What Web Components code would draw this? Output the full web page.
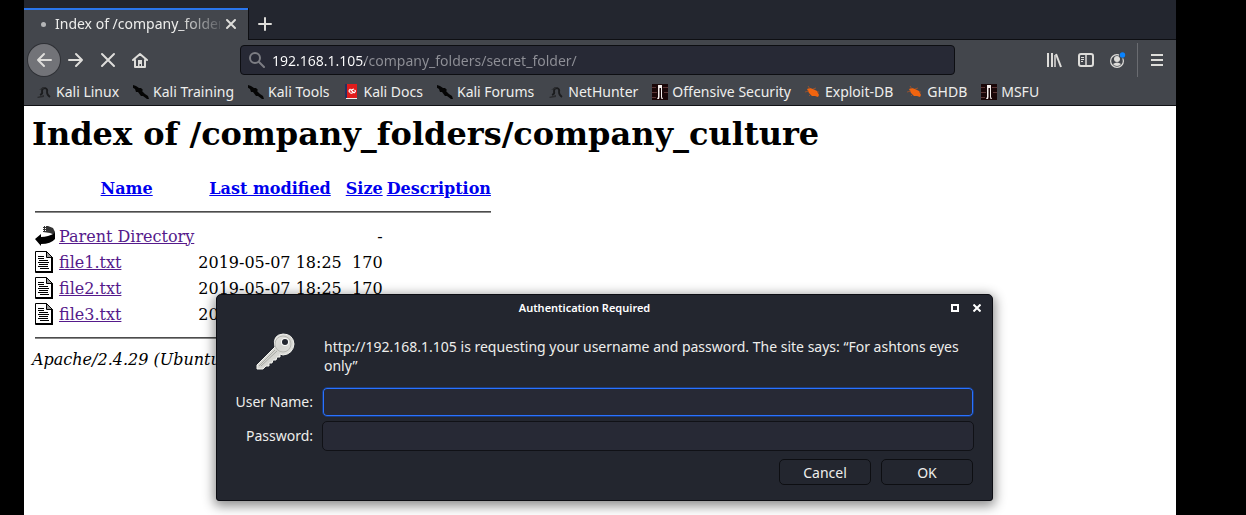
<!DOCTYPE html>
<html lang="en">
<head>
<meta charset="utf-8">
<title>Index of /company_folders/company_culture</title>
<style>
  html { background: #000; }
  body { margin: 0; font-family: "Noto Sans", sans-serif; font-size: 14px; color: #eeeeec; }
</style>
</head>
<body>
<browser-window></browser-window>

<script>
const define = (name, html, setup) => {
  const template = document.createElement('template');
  template.innerHTML = html;
  customElements.define(name, class extends HTMLElement {
    connectedCallback() {
      if (this.shadowRoot) return;
      const root = this.attachShadow({ mode: 'open' });
      root.append(template.content.cloneNode(true));
      if (setup) setup.call(this, root);
    }
  });
};

const line = (w, body) => `<g fill="none" stroke="#deddda" stroke-width="${w}" stroke-linecap="round" stroke-linejoin="round">${body}</g>`;
const blade = `<path fill="#050505" d="M0 1l3 1 3 2 2 0 2 2-1 1 3 3 3 2 1 3-2 0-4-3-2 0-3-4-2 0-1-3-3-2z"/>`;
const dragon = `<path fill="none" stroke="#1b1c1e" stroke-width="1.800" d="M4 11q3-1 2-4-0-3 3-3 3 1 2 4 0 3 3 5"/><path fill="#2a2b2e" d="M1 13l7-2 0 2-6 1zM3 6l4-3 3 0-3 2z"/>`;
const offsec = `<path fill="#1a0708" d="M0 0h16v16H0z"/><path stroke="#5d3636" d="M0 3.500h4M11 3.500h5M0 8.500h5M12 8.500h4M0 13.500h4"/><path fill="#f6f0ee" d="M6 1h4v12l1 2H9.500L9 13V4H7.500v9L7 15H5l1-2z"/>`;
const bug = `<path fill="#f0640f" d="M2 5l3-1 3 1 4 2 2 4-1 2-3-1-3 0-3-3z"/><path stroke="#a95427" stroke-width=".8" fill="none" d="M3 2l2 3M8 5l3-1M0 8l4-1M4 12l2-2M12 8l2 0"/>`;
const icons = {
  back: [16, line(2, '<path d="M15 8H2M8 2L2 8l6 6"/>')],
  forward: [16, line(2, '<path d="M1 8h13M8 2l6 6-6 6"/>')],
  stop: [16, line(2, '<path d="M2 2l12 12M14 2L2 14"/>')],
  home: [16, line(2, '<path d="M1 8l7-6 7 6M3 8v7h10V8"/>') + '<path fill="#deddda" d="M6 8h4v6H9v-2H7.500v2H6z"/>'],
  plus: [14, line(2, '<path d="M7 1v12M1 7h12"/>')],
  close: [12, line(2, '<path d="M2 2l8 8M10 2l-8 8"/>')],
  search: [16, '<g fill="none" stroke="#7c7d83" stroke-width="2" stroke-linecap="round"><circle cx="6" cy="6" r="5"/><path d="M10 10l5 5"/></g>'],
  library: [16, '<path stroke="#deddda" stroke-width="2" fill="none" d="M2 1v14M6 1v14"/><path stroke="#deddda" stroke-width="1.500" d="M9 3v12"/><path stroke="#deddda" stroke-width="2" d="M10 2l5 13"/>'],
  sidebar: [16, line(2, '<rect x="1" y="2" width="14" height="12" rx="2"/>') + '<path stroke="#deddda" d="M8 2v12" stroke-width="1.500"/><path stroke="#deddda" d="M3 5.500h3M3 7.500h3M3 9.500h2"/>'],
  account: [16, '<circle cx="7" cy="9" r="6.400" fill="none" stroke="#deddda" stroke-width="1.200"/><circle cx="7" cy="7" r="3" fill="#deddda"/><path fill="#deddda" d="M3 12q4-3 8 0-1 2-4 2t-4-2z"/><circle cx="12.500" cy="3" r="3.500" fill="#43464c"/><circle cx="12.500" cy="3" r="2.700" fill="#0a84ff"/>'],
  menu: [16, '<path stroke="#deddda" stroke-width="2" d="M2 3h12M2 8h12M2 13h12"/>'],
  linux: [16, dragon],
  blade: [16, blade],
  docs: [16, '<path fill="#27305f" d="M2 0h2v14H2z"/><path fill="#e01b1b" d="M4 0h10v14H4z"/><path fill="#f1eeee" d="M3 14h11v1H3z"/><path fill="none" stroke="#fff" stroke-width="1.200" d="M7.500 5q-3 2 0 3.500M11 5L8 6l2.500 2.500-3 1M11.500 6q2 1-.5 3"/>'],
  offsec: [16, offsec],
  bug: [16, bug],
  maximize: [8, '<path fill="none" stroke="#fff" stroke-width="2" d="M1 1h6v6H1z"/>'],
  cross: [8, '<path stroke="#fff" stroke-width="2" d="M.5.5l7 7M7.500.5l-7 7"/>'],
  key: [40, `<defs><linearGradient id="m" x1="0" y1="0" x2="1" y2="1"><stop offset="0" stop-color="#f4f4f2"/><stop offset=".5" stop-color="#d3d3cf"/><stop offset="1" stop-color="#eeeeec"/></linearGradient></defs>
    <path fill="url(#m)" stroke="#f4f4f0" d="M20 15Q17 3 28 2q10 0 11 10-1 10-11 11l-3-1 0 3-3 0-1 3-3 0-1 3-3 0 0 3-3 0-3 3H2v-4z"/>
    <path stroke="#a9aaa5" stroke-width="1" fill="none" d="M20 18L4 34M22 19L6 34"/><circle cx="28" cy="12" r="8" fill="none" stroke="#b7b8b3"/>
    <circle cx="30" cy="10" r="4" fill="#fafaf8"/><circle cx="30" cy="10" r="3" fill="#23262f"/>`]
};

define('ui-icon', `<style>:host{display:block;flex:none} svg{display:block}</style><svg aria-hidden="true"></svg>`, function (root) {
  const [size, body] = icons[this.getAttribute('name')];
  const svg = root.querySelector('svg');
  svg.setAttribute('viewBox', `0 0 ${size} ${size}`);
  svg.setAttribute('width', size);
  svg.setAttribute('height', size);
  svg.innerHTML = body;
});

define('icon-button', `<style>
  :host{display:block;flex:none}
  button{display:grid;place-items:center;width:32px;height:32px;padding:0;border:0;border-radius:50%;background:none}
  :host([round]) button{background:#727378;box-shadow:0 0 0 1px #2f3136}
  :host([small]) button{width:22px;height:22px}
</style><button type="button"><slot></slot></button>`, function (root) {
  root.querySelector('button').setAttribute('aria-label', this.getAttribute('label'));
});

define('tab-strip', `<style>
  :host{display:flex;height:40px;background:#23262f;box-sizing:border-box;padding-top:8px}
  .tab{display:flex;align-items:center;box-sizing:border-box;width:224px;padding:0 6px 2px 17px;background:#43464c;border-top:2px solid #2a76ee}
  .dot{width:5px;height:5px;border-radius:50%;background:#b4b5b7;margin-right:9px;flex:none}
  .title{flex:1;min-width:0;white-space:nowrap;line-height:20px;-webkit-mask-image:linear-gradient(90deg,#000 75%,rgba(0,0,0,.15));mask-image:linear-gradient(90deg,#000 75%,rgba(0,0,0,.15))}
  .rest{flex:1;display:flex;align-items:center;border-left:1px solid #0e0f13;border-bottom:1px solid #0e0f13}
</style>
<div class="tab"><span class="dot"></span><span class="title">Index of /company_folder</span><icon-button small label="Close tab"><ui-icon name="close"></ui-icon></icon-button></div>
<div class="rest"><icon-button label="New tab"><ui-icon name="plus"></ui-icon></icon-button></div>`);

define('url-bar', `<style>
  :host{display:flex;align-items:center;gap:7px;box-sizing:border-box;height:30px;padding:0 8px;border:1px solid #0d0e12;border-radius:4px;background:#272935}
  input{flex:1;min-width:0;height:28px;padding:0;border:0;outline:0;font:inherit;
    background:linear-gradient(90deg,#fff 93px,#8f9097 93px);-webkit-background-clip:text;background-clip:text;color:transparent}
</style>
<ui-icon name="search"></ui-icon><input type="text" aria-label="Address" value="192.168.1.105/company_folders/secret_folder/">`);

define('nav-bar', `<style>
  :host{display:flex;align-items:center;box-sizing:border-box;height:40px;padding:0 3px 0 4px;background:#43464c}
  url-bar{flex:1;margin:0 83px 0 84px}
  .sep{width:1px;height:34px;background:#6a6c71;margin:0 3px}
</style>
<icon-button round label="Back"><ui-icon name="back"></ui-icon></icon-button>
<icon-button label="Forward"><ui-icon name="forward"></ui-icon></icon-button>
<icon-button label="Stop"><ui-icon name="stop"></ui-icon></icon-button>
<icon-button label="Home"><ui-icon name="home"></ui-icon></icon-button>
<url-bar></url-bar>
<icon-button label="Library"><ui-icon name="library"></ui-icon></icon-button>
<icon-button label="Sidebars"><ui-icon name="sidebar"></ui-icon></icon-button>
<icon-button label="Account"><ui-icon name="account"></ui-icon></icon-button>
<span class="sep"></span>
<icon-button label="Menu"><ui-icon name="menu"></ui-icon></icon-button>`);

define('book-mark', `<style>
  :host{display:block;flex:none}
  a{display:flex;align-items:center;gap:4px;line-height:20px;color:inherit;text-decoration:none;white-space:nowrap}
</style><a href="#"><slot></slot></a>`, function (root) {
  const icon = document.createElement('ui-icon');
  icon.setAttribute('name', this.getAttribute('icon'));
  root.querySelector('a').prepend(icon);
});

define('bookmarks-bar', `<style>
  :host{display:flex;gap:14px;box-sizing:border-box;height:26px;padding:2px 12px;overflow:hidden;background:#43464c;border-bottom:1px solid #101115}
</style>
<book-mark icon="linux">Kali Linux</book-mark>
<book-mark icon="blade">Kali Training</book-mark>
<book-mark icon="blade">Kali Tools</book-mark>
<book-mark icon="docs">Kali Docs</book-mark>
<book-mark icon="blade">Kali Forums</book-mark>
<book-mark icon="linux">NetHunter</book-mark>
<book-mark icon="offsec">Offensive Security</book-mark>
<book-mark icon="bug">Exploit-DB</book-mark>
<book-mark icon="bug">GHDB</book-mark>
<book-mark icon="offsec">MSFU</book-mark>`);

const page = `<svg class="i" width="20" height="22" viewBox="0 0 20 22" aria-hidden="true"><path fill="#fff" stroke="#000" d="M.5.500h11l6 6v15H.5z"/><path fill="#999" stroke="#000" d="M11.500.500v6h6z"/><path stroke="#000" d="M17 7v15M1 21h17" stroke-width="2"/><path stroke="#000" d="M3 5.500h6M3 7.500h6M4 9.500h9M3 11.500h11M4 13.500h9M3 15.500h10M5 17.500h9"/></svg>`;
const back = `<svg class="i" width="20" height="22" viewBox="0 0 20 22" aria-hidden="true"><path fill="#333" d="M8 1h5l5 2 2 4v3l-5-2-7-1z"/><path fill="#000" d="M0 14l6-5v3q7 0 14-4v6q-4 5-14 5v2z"/><path stroke="#fff" stroke-width="1" stroke-dasharray="1 1" d="M8.500 1v6M10.500 1v5"/></svg>`;
const row = (icon, name, date, size) => `<tr><td>${icon}</td><td><a class="v" href="#">${name}</a></td><td class="r">${date}</td><td class="r">${size}</td><td></td></tr>`;

define('directory-index', `<style>
  :host{display:block;padding:9px 8px 8px;color:#000;font-family:"DejaVu Serif",serif;font-size:16px;line-height:19px}
  h1{margin:0 0 21px;font-size:32px;line-height:38px}
  table{border-spacing:2px}
  td,th{padding:1px;white-space:nowrap}
  th{height:22px}
  .r{text-align:right}
  a{color:#00e}
  .v{color:#551a8b}
  .i{display:block}
  hr{margin:8px 0;border:0;border-top:1px solid #4c4c4c;border-bottom:1px solid #8a8a8a}
  address{font-style:italic}
</style>
<h1>Index of /company_folders/company_culture</h1>
<table>
<tr><th></th><th><a href="#">Name</a></th><th><a href="#">Last modified</a></th><th><a href="#">Size</a></th><th><a href="#">Description</a></th></tr>
<tr><td colspan="5"><hr></td></tr>
${row(back, 'Parent Directory', '', '-')}
${row(page, 'file1.txt', '2019-05-07 18:25', '170')}
${row(page, 'file2.txt', '2019-05-07 18:25', '170')}
${row(page, 'file3.txt', '2019-05-07 18:25', '170')}
<tr><td colspan="5"><hr></td></tr>
</table>
<address>Apache/2.4.29 (Ubuntu)</address>`);

define('auth-dialog', `<style>
  :host{display:block;box-sizing:border-box;background:#23262f;border:1px solid #0c0d13;border-radius:5px 5px 3px 3px;box-shadow:0 3px 12px 2px rgba(0,0,0,.45);padding:0 18px 15px}
  header{display:flex;gap:10px;align-items:center;height:26px;margin-right:-14px}
  h2{flex:1;margin:0;text-align:center;font-size:11px;line-height:16px;font-weight:600;color:#fff}
  .win{display:flex}
  form{display:grid;grid-template-columns:78px 1fr;column-gap:9px;row-gap:4px;align-items:center}
  form ui-icon{justify-self:end;margin-right:18px}
  p{margin:0;line-height:19px;padding:16px 0 8px 2px}
  label{text-align:right;line-height:20px;white-space:nowrap}
  input{box-sizing:border-box;width:100%;height:30px;margin:0;padding:0 8px;border:1px solid #101116;border-radius:5px;background:#272935;color:#fff;font:inherit;outline:0}
  #user{border-color:#193a7c;box-shadow:inset 0 0 0 1px #2a72ff}
  footer{grid-column:1/3;display:flex;justify-content:flex-end;gap:10px;padding:4px 1px 0}
  footer button{box-sizing:border-box;width:92px;height:26px;padding:0;border:1px solid #0d0e12;border-radius:5px;background:#23262f;color:inherit;font:inherit}
</style>
<header><h2>Authentication Required</h2><div class="win"><icon-button small label="Maximize"><ui-icon name="maximize"></ui-icon></icon-button><icon-button small label="Close"><ui-icon name="cross"></ui-icon></icon-button></div></header>
<form>
  <ui-icon name="key"></ui-icon>
  <p>http://192.168.1.105 is requesting your username and password. The site says: “For ashtons eyes only”</p>
  <label for="user">User Name:</label><input id="user" type="text">
  <label for="pass">Password:</label><input id="pass" type="password">
  <footer><button type="button">Cancel</button><button type="button">OK</button></footer>
</form>`);

define('browser-window', `<style>
  :host{display:flex;flex-direction:column;position:relative;min-height:100vh;margin:0 70px 0 24px;background:#fff}
  auth-dialog{position:absolute;top:294px;left:192px;right:183px}
</style>
<tab-strip></tab-strip><nav-bar></nav-bar><bookmarks-bar></bookmarks-bar>
<directory-index></directory-index>
<auth-dialog role="dialog" aria-label="Authentication Required"></auth-dialog>`);
</script>
</body>
</html>
